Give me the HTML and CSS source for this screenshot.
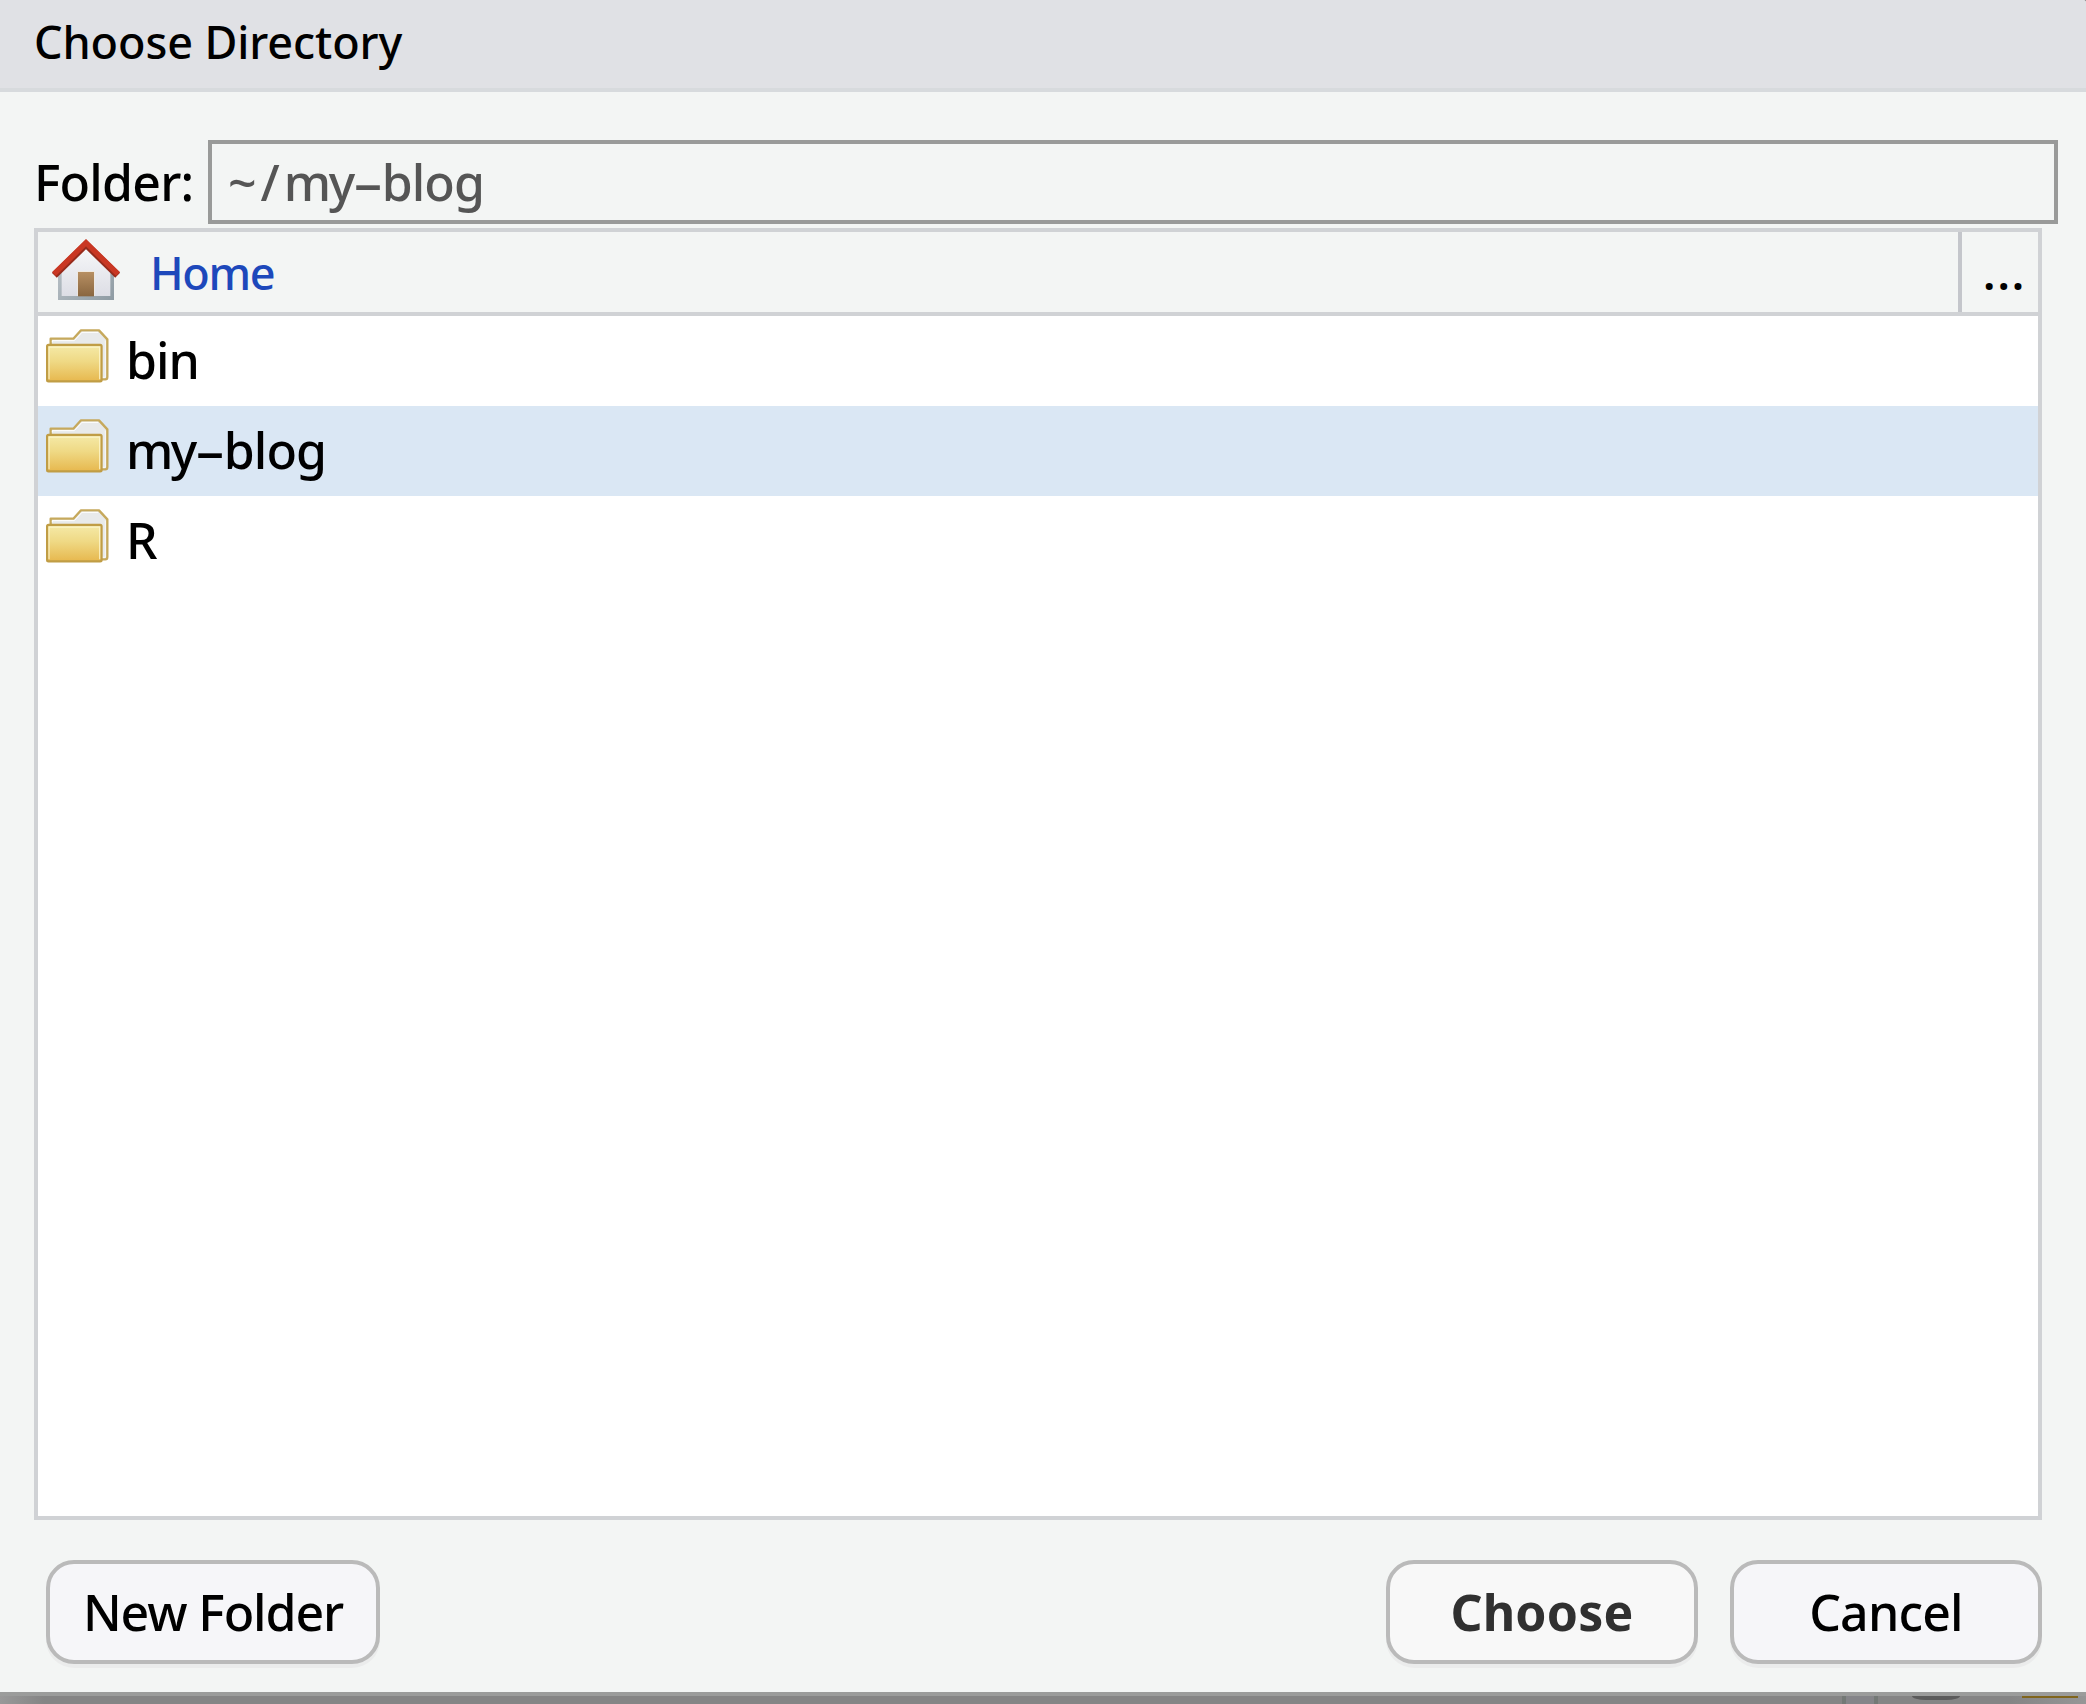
FILE: index.html
```html
<!DOCTYPE html>
<html lang="en">
<head>
<meta charset="utf-8">
<title>Choose Directory</title>
<link rel="stylesheet" href="styles.css">
</head>
<body>
<svg width="0" height="0" class="defs" aria-hidden="true">
  <defs>
    <linearGradient id="front" x1="0" y1="0" x2="0" y2="1"><stop offset="0" stop-color="#f5eaa8"/><stop offset=".45" stop-color="#efd985"/><stop offset="1" stop-color="#e7b84e"/></linearGradient>
    <linearGradient id="wall" x1="0" y1="0" x2="0" y2="1"><stop offset="0" stop-color="#f7f8fa"/><stop offset="1" stop-color="#dddee5"/></linearGradient>
    <linearGradient id="edge" x1="0" y1="0" x2="1" y2="1"><stop offset="0" stop-color="#c3cacf"/><stop offset="1" stop-color="#8e9ba3"/></linearGradient>
    <linearGradient id="door" x1="0" y1="0" x2="0" y2="1"><stop offset="0" stop-color="#b78f62"/><stop offset="1" stop-color="#896640"/></linearGradient>
    <symbol id="folder" viewBox="48 39 192 168">
      <path d="M62 92V71H130L153 46H207L232 73V186Q232 193 226 193H210Z" fill="#e8eaea" stroke="#c6a95c" stroke-width="7" stroke-linejoin="round"/>
      <path d="M67 82V77H133L156 52H204" fill="none" stroke="#fff" stroke-width="3"/>
      <path d="M226 77V187H217" fill="none" stroke="#f8f8f8" stroke-width="3"/>
      <rect x="51.5" y="90" width="163" height="109" rx="4" fill="url(#front)" stroke="#c09d45" stroke-width="7"/>
      <path d="M57 193V96H209V193" fill="none" stroke="#fff8d2" stroke-width="4" opacity=".75"/>
    </symbol>
  </defs>
</svg>
<main class="dialog">
  <header class="titlebar">Choose Directory</header>
  <section class="content">
    <div class="folder-line">
      <label class="folder-label">Folder:</label>
      <div class="folder-input"><span class="tilde">~/</span><span class="m">m</span>y<span class="dash"><span class="dash-glyph">-</span></span><span class="blog">blog</span></div>
    </div>
    <div class="browser">
      <nav class="crumbs">
        <svg class="home-icon" viewBox="36 24 210 192" aria-hidden="true">
          <path d="M54 118L138 42L222 118V210H54Z" fill="url(#edge)"/>
          <path d="M65 118L138 46L211 118V198H65Z" fill="url(#wall)"/>
          <rect x="112" y="123" width="52" height="75" fill="#f0e9df"/>
          <rect x="114" y="126" width="48" height="73" fill="url(#door)"/>
          <path d="M43 136L138 43L233 136" fill="none" stroke="#962b1c" stroke-width="21"/>
          <path d="M42 132L138 38L234 132" fill="none" stroke="#c93723" stroke-width="16"/>
        </svg>
        <a class="home-link">Home</a>
        <span class="more">...</span>
      </nav>
      <ul class="files">
        <li class="file"><svg class="file-icon"><use href="#folder"/></svg><span class="name bin">bin</span></li>
        <li class="file selected"><svg class="file-icon"><use href="#folder"/></svg><span class="name"><span class="m">m</span>y<span class="dash"><span class="dash-glyph">-</span></span><span class="blog">blog</span></span></li>
        <li class="file"><svg class="file-icon"><use href="#folder"/></svg><span class="name">R</span></li>
      </ul>
    </div>
    <footer class="actions">
      <button class="btn new">New Folder</button>
      <button class="btn choose">Choose</button>
      <button class="btn cancel">Cancel</button>
    </footer>
  </section>
</main>
<div class="backdrop">
  <i class="divider"></i><i class="pill"></i><i class="gold"></i>
</div>
</body>
</html>
```

FILE: styles.css
```css
* { box-sizing: border-box; }
body {
  margin: 0;
  width: 2086px;
  height: 1704px;
  overflow: hidden;
  display: flex;
  flex-direction: column;
  background: #868686;
  color: #000;
  font: 500 50px "Noto Sans", "Open Sans", sans-serif;
}
.defs { position: absolute; }
.dialog {
  height: 1696px;
  display: flex;
  flex-direction: column;
  background: #f3f5f4;
  border-bottom: 4px solid #9b9c9b;
  border-top-right-radius: 3px;
}
.titlebar {
  height: 92px;
  padding-left: 34px;
  background: #e0e1e5;
  border-bottom: 4px solid #d7dadd;
  border-top-right-radius: 3px;
  font-size: 45px;
  line-height: 83px;
  letter-spacing: -0.1px;
}
.content {
  flex: 1;
  display: flex;
  flex-direction: column;
  padding: 48px 28px 28px 34px;
}
.folder-line { display: flex; height: 84px; }
.folder-label {
  width: 174px;
  line-height: 84px;
  letter-spacing: -0.8px;
  white-space: nowrap;
}
.folder-input {
  flex: 1;
  padding-left: 16px;
  border: 4px solid #999a99;
  color: #555;
  line-height: 76px;
  white-space: nowrap;
}
.tilde { letter-spacing: 4px; }
.m { letter-spacing: -2.5px; }
.dash { display: inline-block; width: 26.5px; text-align: center; }
.dash-glyph { display: inline-block; transform: scaleX(1.9); }
.blog { letter-spacing: -0.9px; }
.browser {
  width: 2008px;
  height: 1292px;
  margin-top: 4px;
  display: flex;
  flex-direction: column;
  background: #fff;
  border: 4px solid #d0d2d5;
}
.crumbs {
  display: flex;
  height: 84px;
  background: #f3f5f4;
  border-bottom: 4px solid #d0d2d5;
  font-size: 45px;
  line-height: 82px;
}
.home-icon { width: 70px; height: 64px; margin: 6px 0 0 14px; }
.home-link { flex: 1; margin-left: 28px; color: #1d48bb; letter-spacing: -1.3px; }
.more {
  width: 80px;
  padding-left: 21px;
  border-left: 4px solid #c4c6cb;
  font-weight: 600;
  letter-spacing: 2px;
}
.files { margin: 0; padding: 0; list-style: none; }
.file { display: flex; height: 90px; padding-left: 8px; }
.file.selected { background: #dae7f4; }
.file-icon { width: 64px; height: 56px; margin-top: 12px; }
.name { margin-left: 16px; line-height: 88px; white-space: nowrap; }
.bin { letter-spacing: -1px; }
.actions { display: flex; margin-top: 40px; padding-left: 12px; }
.btn {
  width: 312px;
  height: 104px;
  padding: 0;
  border: 4px solid #bababa;
  border-radius: 28px;
  background: #f6f6f9;
  box-shadow: 0 4px 0 #ebecec;
  color: #000;
  font: inherit;
  line-height: 96px;
}
.new { width: 334px; margin-right: auto; letter-spacing: -1.1px; }
.choose { margin-right: 32px; background: #f8f8f8; color: #303030; font-weight: 700; letter-spacing: 0.2px; }
.cancel { margin-right: 16px; letter-spacing: -0.8px; }
.backdrop {
  display: flex;
  height: 8px;
  background: linear-gradient(90deg, #999 0, #858585 44px, #858585 2010px, #969696 100%);
}
.divider { width: 36px; margin-left: 1842px; border: solid #747976; border-width: 0 4px; background: #858589; }
.pill { width: 48px; height: 4px; margin-left: 34px; background: #5b5b5b; border-radius: 0 0 14px 14px / 0 0 4px 4px; }
.gold { width: 56px; height: 2px; margin-left: 62px; background: #80651c; }
```
